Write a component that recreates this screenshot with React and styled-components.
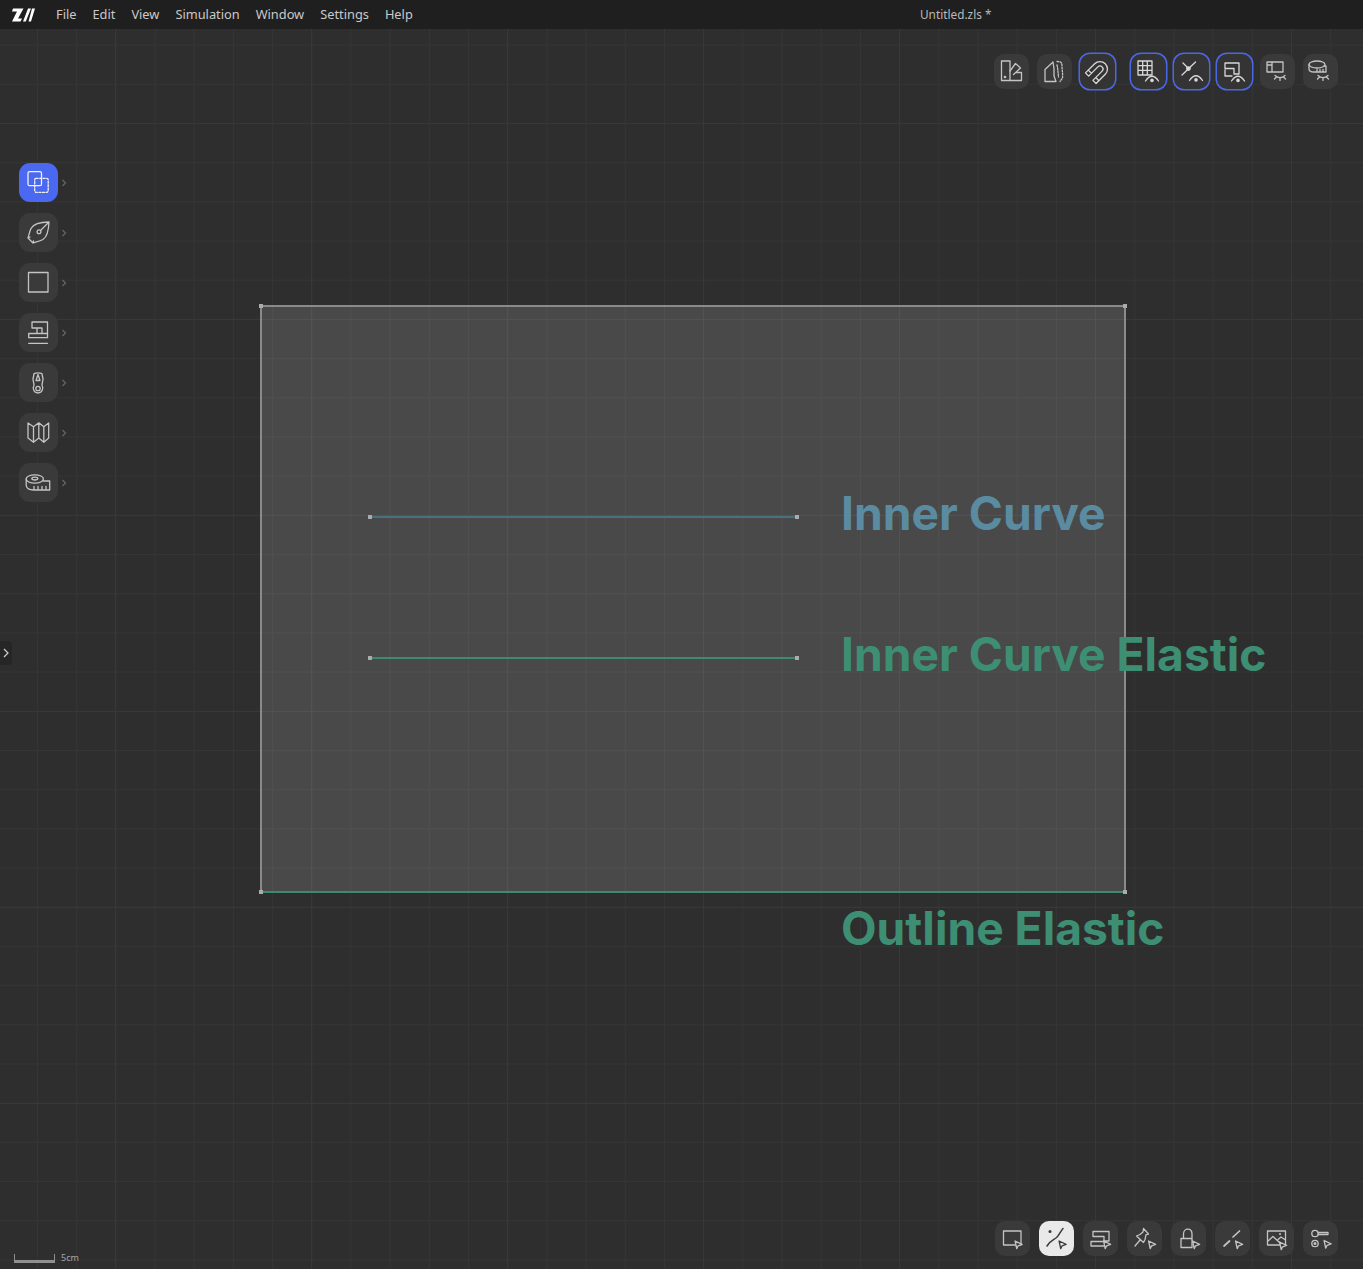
import React from 'react';
import styled, { createGlobalStyle } from 'styled-components';

const GlobalStyle = createGlobalStyle`
  html, body { margin: 0; padding: 0; background: #2e2e2e; }
  body { font-family: "Noto Sans", "Open Sans", sans-serif; overflow: hidden; }
`;

const Page = styled.div`
  display: flex;
  flex-direction: column;
  width: 100%;
  height: 100vh;
`;

const TopBar = styled.header`
  display: flex;
  align-items: center;
  flex: 0 0 29px;
  padding-left: 12px;
  background: #1f1f1f;
  color: #c9c9c9;
  font-size: 12.8px;
`;

const Logo = styled.svg`
  width: 23px;
  height: 14px;
  margin-right: 21px;
`;

const Menu = styled.nav`
  display: flex;
  gap: 16px;
  width: 864px;
`;

const MenuItem = styled.span`
  line-height: 29px;
`;

const DocTitle = styled.span`
  font-size: 11.8px;
  color: #b9b9b9;
  line-height: 29px;
`;

const Canvas = styled.main`
  position: relative;
  flex: 1;
  overflow: hidden;
  background-color: #2e2e2e;
  background-image:
    linear-gradient(to right, #383838 1px, transparent 1px),
    linear-gradient(to bottom, #383838 1px, transparent 1px),
    linear-gradient(to right, #353535 1px, transparent 1px),
    linear-gradient(to bottom, #353535 1px, transparent 1px);
  background-size: 196px 196px, 196px 196px, 39.2px 39.2px, 39.2px 39.2px;
  background-position: 115px 0, 0 94px, 37px 0, 0 15.6px;
`;

const Piece = styled.div`
  position: absolute;
  left: 260px;
  top: 276px;
  width: 866px;
  height: 588px;
  box-sizing: border-box;
  background: rgba(255, 255, 255, 0.135);
  border: 2px solid #8a8a8a;
  border-bottom: 2px solid #3a8a74;
`;

const Handle = styled.i`
  position: absolute;
  left: ${p => p.$x - 2}px;
  top: ${p => p.$y - 31}px;
  width: 4px;
  height: 4px;
  background: #ababab;
`;

const Seam = styled.div`
  position: absolute;
  left: 370px;
  top: ${p => p.$y - 30}px;
  width: 427px;
  height: 2px;
  background: ${p => p.$color};
`;

const CurveLabel = styled.span`
  position: absolute;
  left: 841px;
  top: ${p => p.$y - 30}px;
  font-family: Inter, "Liberation Sans", sans-serif;
  font-weight: 700;
  font-size: 46.2px;
  line-height: 54px;
  white-space: nowrap;
  color: ${p => p.$color};
`;

const ToolRail = styled.aside`
  position: absolute;
  left: 19px;
  top: 134px;
  display: flex;
  flex-direction: column;
  gap: 11px;
`;

const ToolRow = styled.div`
  display: flex;
  align-items: center;
  gap: 3px;
`;

const IconButton = styled.button`
  display: flex;
  align-items: center;
  justify-content: center;
  box-sizing: border-box;
  flex: none;
  width: ${p => p.$size || 35}px;
  height: ${p => p.$size || 35}px;
  padding: 0;
  border: 0;
  border-radius: ${p => (p.$size ? 11 : 10)}px;
  background: ${p => (p.$primary ? '#4a68f0' : p.$light ? '#e9e9e9' : '#3a3a3a')};
  color: ${p => (p.$primary ? '#f2f2f2' : p.$light ? '#3a3a3a' : '#c4c4c4')};
  --btn-bg: ${p => (p.$primary ? '#4a68f0' : p.$light ? '#e9e9e9' : '#3a3a3a')};
  ${p => p.$toggled && `
    background: #343434;
    --btn-bg: #343434;
    box-shadow: 0 0 0 1.5px #4a68e6;
    color: #d8d8d8;
  `}
  svg { display: block; }
`;

const Caret = styled.svg`
  width: 6px;
  height: 8px;
  color: #666;
`;

const ViewTools = styled.div`
  position: absolute;
  right: 25px;
  top: 25px;
  display: flex;
  gap: 16px;
`;

const ToolGroup = styled.div`
  display: flex;
  gap: ${p => p.$gap || 8}px;
`;

const ModeTools = styled.div`
  position: absolute;
  right: 25px;
  bottom: 13px;
  display: flex;
  gap: 9px;
`;

const SideTab = styled.button`
  position: absolute;
  left: 0;
  top: 612px;
  width: 12px;
  height: 24px;
  padding: 0;
  border: 0;
  border-radius: 0 4px 4px 0;
  background: #262626;
  display: flex;
  align-items: center;
  justify-content: center;
`;

const ScaleBar = styled.div`
  position: absolute;
  left: 14px;
  bottom: 6px;
  display: flex;
  align-items: flex-end;
  gap: 6px;
  color: #a8a8a8;
  font-size: 9px;
  line-height: 10px;
`;

const ScaleRule = styled.div`
  box-sizing: border-box;
  width: 41px;
  height: 9px;
  border: 1.5px solid #8f8f8f;
  border-top: 0;
  border-bottom-width: 3px;
`;

// every icon is drawn in its button's own pixel grid
const Svg = ({ size = 35, children }) => (
  <svg width={size} height={size} viewBox={`0 0 ${size} ${size}`} fill="none" stroke="currentColor" strokeWidth="1.3" strokeLinejoin="round" strokeLinecap="round">
    {children}
  </svg>
);

const EyeOpen = ({ x = 21, y = 26 }) => (
  <g>
    <path d={`M${x - 6.5} ${y + 1} Q${x} ${y - 8.5} ${x + 6.5} ${y + 1}`} />
    <circle cx={x} cy={y + 0.4} r="1.8" fill="currentColor" stroke="none" />
  </g>
);

const EyeShut = ({ x = 20, y = 23 }) => (
  <path d={`M${x - 5} ${y - 1.5} Q${x} ${y + 3} ${x + 5} ${y - 1.5} M${x - 3.5} ${y} L${x - 5.5} ${y + 2} M${x} ${y + 1} V${y + 3.4} M${x + 3.5} ${y} L${x + 5.5} ${y + 2}`} />
);

const Arrow = ({ x = 22, y = 24 }) => (
  <path d={`M${x - 2.4} ${y - 4} L${x + 4.6} ${y - 0.6} L${x + 0.6} ${y + 0.8} L${x - 0.8} ${y + 3.6} Z`} style={{ fill: 'var(--btn-bg)' }} />
);

const viewIcons = [
  <Svg key="swatch">
    <rect x="7.5" y="7" width="8.5" height="19.5" />
    <circle cx="11" cy="23" r="0.7" fill="currentColor" />
    <path d="M16 17 L21.5 9.5 L26.5 14 L19.5 20.5 M16 26.5 H27.5 V18.5 H21.5" />
  </Svg>,
  <Svg key="offset">
    <path d="M8 27.5 V15.5 L15 9 L16 8 L17 15 V22 L19 27.5 Z" />
    <path d="M20 7.5 C24 7.5 25 8.5 25 12 C25 16 26 20 25.5 24 L23 27.5 M20 11 C21 15 21 19 21.5 23" strokeDasharray="1.6 1.4" />
  </Svg>,
  <Svg key="magnet">
    <g transform="rotate(45 17.5 17.5)">
      <path d="M10 27 V14 a7.5 7.5 0 0 1 15 0 V27 H20.5 V14 a3 3 0 0 0 -6 0 V27 Z M10 23 H14.5 M20.5 23 H25" />
    </g>
  </Svg>,
  <Svg key="grid-eye">
    <path d="M7 7 H21 V21 H7 Z M11.7 7 V21 M16.3 7 V21 M7 11.7 H21 M7 16.3 H21" />
    <EyeOpen x={21} y={26} />
  </Svg>,
  <Svg key="cross-eye">
    <path d="M9 9 L15 15 M21.5 8 L8 21" />
    <circle cx="14.4" cy="14.6" r="2.4" fill="currentColor" stroke="none" />
    <EyeOpen x={22} y={25.5} />
  </Svg>,
  <Svg key="machine-eye">
    <path d="M8 9 H22 V20 H17 V14.5 H8 Z M8 16 V22 H15" />
    <EyeOpen x={21} y={26} />
  </Svg>,
  <Svg key="fold-shut">
    <path d="M7 8 H23 V18 H7 Z M12 8 V18 M7 11 H12" />
    <EyeShut x={20} y={23} />
  </Svg>,
  <Svg key="tape-shut">
    <ellipse cx="14" cy="10.5" rx="8" ry="3.5" />
    <path d="M6 10.5 V15 C6 17 8 18 11 18 H23 V12 H21 M14 18 V15.5 M17 18 V15.5 M20 18 V15.5" />
    <EyeShut x={20} y={23} />
  </Svg>,
];

const railIcons = [
  <Svg key="select" size={39}>
    <rect x="9" y="8.7" width="13.5" height="14" rx="1.5" />
    <rect x="15.7" y="15.3" width="13.5" height="14" rx="1.5" strokeDasharray="2 1.5" />
  </Svg>,
  <Svg key="pen" size={39}>
    <path d="M30 9 C23 9 15 10 12 15.5 C10.5 18.5 10 22 9 25 L14 30 C17 29 21 28 24 26.5 C28.5 23.5 29.7 16 30 9 Z M30 9 L21.5 17.5 M9 25 L11 24 M14 30 L14.5 28" />
    <circle cx="20" cy="18.8" r="1.9" />
  </Svg>,
  <Svg key="rect" size={39}>
    <rect x="9.5" y="9.5" width="19.5" height="19.5" />
  </Svg>,
  <Svg key="machine" size={39}>
    <path d="M13 9 H28.5 V20.5 H23 V15 H13 Z M9.7 20.5 H28.5 V24.7 H9.7 Z M9.7 30.3 H28.5 M18 15 V20.5" />
  </Svg>,
  <Svg key="zipper" size={39}>
    <path d="M15 11 C15 9.5 23 9.5 23 11 L24 16 C24 18 23 20 23 22 C24.5 25 23.5 30 19 30 C14.5 30 13.5 25 15 22 C15 20 14 18 14 16 Z" />
    <path d="M19 11.5 L21 17.5 H17 Z" />
    <circle cx="19" cy="25.5" r="2.2" />
  </Svg>,
  <Svg key="map" size={39}>
    <path d="M9 10 L14.5 13.8 L19.8 9.8 L24.8 13.8 L29.7 10 V25 L24.8 29.3 L19.8 25 L14.5 29.3 L9 25 Z M14.5 13.8 V29.3 M19.8 9.8 V25 M24.8 13.8 V29.3" />
  </Svg>,
  <Svg key="tape" size={39}>
    <ellipse cx="15.8" cy="16" rx="8.6" ry="4.2" />
    <ellipse cx="15.8" cy="15.6" rx="3" ry="1.4" />
    <path d="M7.2 16 V22 C7.2 25 10 27 15 27 H30.7 V18 H24.4 M15 27 V23.5 M19 27 V23.5 M23 27 V23.5 M27 27 V23.5" />
  </Svg>,
];

const modeIcons = [
  <Svg key="rect-arrow">
    <path d="M8.5 10 H26 V24 H8.5 Z" />
    <Arrow x={22.5} y={24} />
  </Svg>,
  <Svg key="curve-arrow">
    <path d="M8 25 C11 20 14 19 17 17 C20 15 21 11 24 7.5" strokeWidth="1.5" />
    <circle cx="11" cy="10.5" r="1.5" fill="currentColor" stroke="none" />
    <Arrow x={22.5} y={24} />
  </Svg>,
  <Svg key="machine-arrow">
    <path d="M10 10.5 H26 V20 H21 V15.5 H10 Z M8 20.5 H23 V25 H8 Z" />
    <Arrow x={23} y={24} />
  </Svg>,
  <Svg key="pin-arrow">
    <path d="M8 25 L13.5 18.5 M16.5 7.5 L21.5 13 L19 13.7 L18 18.5 L16.5 21.5 L9.5 15 L13 13.5 L16 11 Z" />
    <Arrow x={24} y={24} />
  </Svg>,
  <Svg key="lock-arrow">
    <path d="M10 17.5 H21 V26.5 H10 Z M12.5 17.5 V13 C12.5 6.5 21 6.5 21 13 V17.5" />
    <Arrow x={24} y={24} />
  </Svg>,
  <Svg key="line-arrow">
    <path d="M9 25 L14.5 20 M18 16 L24.5 10" strokeWidth="1.7" />
    <Arrow x={23} y={24} />
  </Svg>,
  <Svg key="image-arrow">
    <path d="M8.5 10 H26.5 V24 H8.5 Z M8.5 20.5 L14 15.5 L21 22 M18.5 19 L22 16 L26.5 19" />
    <circle cx="21" cy="13" r="1" fill="currentColor" stroke="none" />
    <Arrow x={23} y={25} />
  </Svg>,
  <Svg key="key-arrow">
    <circle cx="12" cy="12.5" r="3.2" />
    <path d="M15 11.5 H25 V13.5 H15" />
    <circle cx="12" cy="22.5" r="3.2" />
    <circle cx="12" cy="22.5" r="1.5" fill="currentColor" stroke="none" />
    <Arrow x={23.5} y={23.5} />
  </Svg>,
];

const menuItems = ['File', 'Edit', 'View', 'Simulation', 'Window', 'Settings', 'Help'];

const handles = [
  [261, 306], [1125, 306], [261, 892], [1125, 892],
  [370, 517], [797, 517], [370, 658], [797, 658],
];

const BLUE = '#5b8ba1';
const GREEN = '#3e8e74';

const CaretIcon = () => (
  <Caret viewBox="0 0 6 8" fill="none" stroke="currentColor" strokeWidth="1.2">
    <path d="M1.5 1 L4.5 4 L1.5 7" />
  </Caret>
);

const App = () => {
  return (
    <Page>
      <GlobalStyle />
      <TopBar>
        <Logo viewBox="0 0 23 14">
          <path d="M1 0.5 H11.5 L6 10.5 H10 L8.5 13.5 H0 L5 3.5 H0 Z" fill="#fff" />
          <path d="M11 13.5 L16 0.5 H19 L13.8 13.5 Z M16.5 13.5 L20 0.5 H23 L19 13.5 Z" fill="#fff" />
        </Logo>
        <Menu>
          {menuItems.map((item) => (
            <MenuItem key={item}>{item}</MenuItem>
          ))}
        </Menu>
        <DocTitle>Untitled.zls *</DocTitle>
      </TopBar>

      <Canvas>
        <Piece />
        <Seam $y={517} $color="#4a6f7f" />
        <Seam $y={658} $color="#3c8a74" />
        {handles.map(([x, y]) => (
          <Handle key={`${x}-${y}`} $x={x} $y={y} />
        ))}
        <CurveLabel $y={487} $color={BLUE}>Inner Curve</CurveLabel>
        <CurveLabel $y={628} $color={GREEN}>Inner Curve Elastic</CurveLabel>
        <CurveLabel $y={902} $color={GREEN}>Outline Elastic</CurveLabel>

        <ToolRail>
          {railIcons.map((icon, i) => (
            <ToolRow key={i}>
              <IconButton $size={39} $primary={i === 0}>{icon}</IconButton>
              <CaretIcon />
            </ToolRow>
          ))}
        </ToolRail>

        <ViewTools>
          <ToolGroup>
            {viewIcons.slice(0, 3).map((icon, i) => (
              <IconButton key={i} $toggled={i === 2}>{icon}</IconButton>
            ))}
          </ToolGroup>
          <ToolGroup>
            {viewIcons.slice(3).map((icon, i) => (
              <IconButton key={i} $toggled={i < 3}>{icon}</IconButton>
            ))}
          </ToolGroup>
        </ViewTools>

        <ModeTools>
          {modeIcons.map((icon, i) => (
            <IconButton key={i} $light={i === 1}>{icon}</IconButton>
          ))}
        </ModeTools>

        <SideTab>
          <svg width="6" height="10" viewBox="0 0 6 10" fill="none" stroke="#d0d0d0" strokeWidth="1.2">
            <path d="M1 1 L5 5 L1 9" />
          </svg>
        </SideTab>

        <ScaleBar>
          <ScaleRule />
          <span>5cm</span>
        </ScaleBar>
      </Canvas>
    </Page>
  );
};

export default App;
